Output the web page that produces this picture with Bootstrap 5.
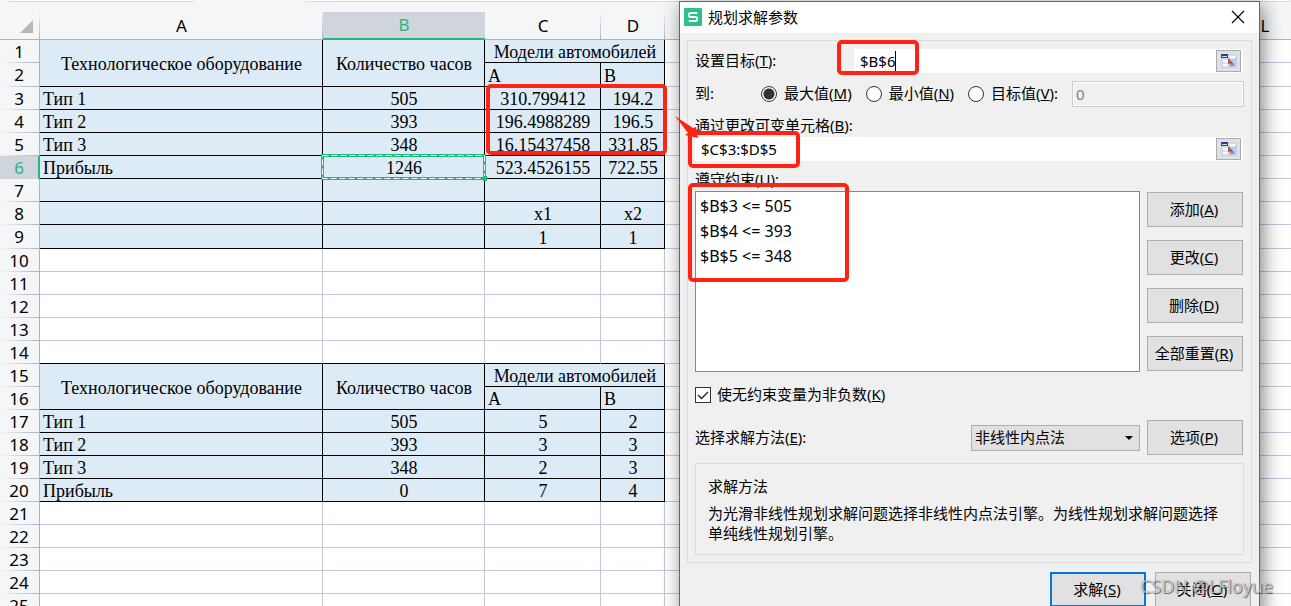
<!DOCTYPE html>
<html lang="zh-CN">
<head>
<meta charset="utf-8">
<meta name="viewport" content="width=device-width, initial-scale=1">
<title>规划求解参数</title>
<link href="https://cdn.jsdelivr.net/npm/bootstrap@5.3.0/dist/css/bootstrap.min.css" rel="stylesheet">
<style>
  body { font-family: "Noto Sans", "Noto Sans CJK SC", sans-serif; font-size: 15px; line-height: 20px; color: #000; background: #fff; }

  /* formula bar remainder above the sheet */
  .bar-strip { height: 12px; background: #f5f6f8; }
  .bar-strip div { height: 2px; background: #fff; border: 1px solid #d8dadd; border-top: 0; border-radius: 0 0 2px 2px; }
  .name-box { width: 186px; margin-left: 8px; margin-right: 111px; }

  /* sheet */
  .sheet { table-layout: fixed; width: 1304px; border-collapse: separate; border-spacing: 0; font-family: "Liberation Serif", serif; font-size: 18px; }
  .sheet th, .sheet td { padding: 0; height: 23px; line-height: 22px; border: 0 solid #c0c7da; border-width: 0 1px 1px 0; white-space: nowrap; text-align: center; vertical-align: middle; }
  .sheet td { padding: 2px 0 0 1px; line-height: 20px; }
  .sheet .tall > * { height: 24px; }
  .c-head { width: 40px; } .c-a { width: 283px; } .c-b { width: 162px; } .c-c { width: 116px; } .c-d { width: 64px; } .c-x { width: 80px; }
  .sheet th { font-family: "Noto Sans", sans-serif; font-size: 17px; font-weight: 400; background: #f5f6f8; border-right-color: #a8b2c8; }
  .sheet tbody th { border-bottom: 0; background: linear-gradient(90deg, #f5f6f8, #a8b2c8) 0 100% / 100% 1px no-repeat #f5f6f8; padding-right: 1px; }
  .sheet thead th { height: 28px; border-bottom-color: #a8b2c8; border-right: 0; background: linear-gradient(#f5f6f8, #a8b2c8) 100% 0 / 1px 100% no-repeat #f5f6f8; }
  .sheet thead th.picked { background: #d0d4dd; color: #1fba7c; border-bottom: 2px solid #1fba7c; }
  .sheet tbody th.picked { background: #d0d4dd; color: #1fba7c; border-right: 2px solid #1fba7c; padding: 0; }
  .sheet td.f { background: #ddebf6; border-color: #000; }
  .sheet td.l { text-align: left; padding-left: 3px; }
  .sheet td.base { border-bottom-color: #000; }
  .sheet td.selected-cell { position: relative; }
  .marquee { position: absolute; left: -2px; top: -2px; width: 167px; height: 28px; z-index: 1; }

  /* dialog */
  .solver { position: absolute; left: 679px; top: 1px; width: 581px; background: #f0f0f0; border: 1px solid #666; box-shadow: 3px 4px 18px rgba(0,0,0,.5); z-index: 2; }
  .solver-title { height: 31px; background: #fff; padding: 0 14px 2px 4px; gap: 6px; }
  .solver-body { padding: 7px; }
  .solver label, .solver .to-label { padding-bottom: 2px; }
  .frame { border: 1px solid #dcdcdc; }
  .frame-main { padding: 8px 7px 7px; }
  .frame-note { height: 92px; margin-top: 8px; padding: 12px 12px; }
  .note-name { margin-bottom: 7px; }
  .solver input[type=text] { border: 0; outline: 0; background: #fff; height: 24px; padding: 2px 6px; color: #000; min-width: 0; }
  .solver .target-label { width: 159px; }
  .solver .to-label { width: 66px; }
  .solver .goal { margin-left: 7px; margin-right: 14px; }
  .solver .goal-last { margin-right: 0; }
  .solver input[type=text].value-box { height: 26px; width: 172px; padding: 0 3px; background: #f0f0f0; color: #808080; border: 1px solid #ccc; box-shadow: inset 0 0 0 1px #fff; }
  .ref-box { background: #fff; padding-right: 2px; margin-right: 1px; }
  .pick { width: 25px; height: 22px; padding: 0; border: 1px solid #adadad; background: #e1e1e1; flex: none; }
  .pick svg { display: block; margin: auto; }
  .caret { position: absolute; left: 41px; top: 2px; width: 1px; height: 20px; background: #000; }
  .solver input[type=radio], .solver input[type=checkbox] { appearance: none; width: 16px; height: 16px; margin: 0; background: #fff; border: 1px solid #333; flex: none; }
  .solver input[type=radio] { border-radius: 50%; }
  .solver input[type=radio]:checked { background: radial-gradient(circle, #333 0 5px, #fff 6px); }
  .nonneg-row { margin: 12px 0 14px; }
  .nonneg-row label { margin-left: 6px; }
  .tick { position: absolute; left: 0; top: 1px; pointer-events: none; }
  .solver .field-label { height: 30px; padding-bottom: 2px; }
  .rules { height: 181px; background: #fff; border: 1px solid #828790; padding: 2px 4px; font-size: 16px; line-height: 25px; }
  .solver .cmd { height: 35px; width: 96px; padding: 0 2px 2px 0; border: 1px solid #adadad; border-radius: 0; background: #e1e1e1; color: #000; font-size: 15px; line-height: 20px; }
  .solver .cmd.main-cmd { border: 2px solid #0078d7; }
  .cmd-stack { gap: 13px; padding-top: 1px; }
  .cmd-row { gap: 7px; margin-right: 1px; }
  .solver-foot { gap: 9px; padding: 9px 1px 0 0; }
  .method-select { appearance: none; width: 169px; height: 26px; padding: 0 3px 2px; border: 1px solid #adadad; border-radius: 0; color: #000; background: #e1e1e1; }
  .method-arrow { position: absolute; right: 7px; top: 11px; border: 4px solid transparent; border-top-color: #000; border-bottom: 0; pointer-events: none; }
  .marks { position: absolute; left: 0; top: 0; z-index: 3; pointer-events: none; }
  .stamp { position: absolute; left: 1140px; top: 574px; z-index: 4; font-family: "Open Sans", sans-serif; font-size: 18px; line-height: 24px; color: rgba(240,240,240,.7); text-shadow: 1px 1px 1px rgba(0,0,0,.5), 0 0 1px rgba(0,0,0,.4); pointer-events: none; }
</style>
</head>
<body>
<main class="position-relative vh-100 overflow-hidden">
  <div class="bar-strip d-flex"><div class="name-box"></div><div class="flex-grow-1"></div></div>

  <table class="sheet">
    <colgroup><col class="c-head"><col class="c-a"><col class="c-b"><col class="c-c"><col class="c-d"><col class="c-x" span="8"></colgroup>
    <thead>
      <tr>
        <th><svg width="40" height="27" class="d-block"><path d="M33 8V21H20z" fill="#b7b7b7"/></svg></th>
        <th>A</th><th class="picked">B</th><th>C</th><th>D</th><th>E</th><th>F</th><th>G</th><th>H</th><th>I</th><th>J</th><th>K</th><th>L</th>
      </tr>
    </thead>
    <tbody>
      <tr><th>1</th><td class="f" rowspan="2">Технологическое оборудование</td><td class="f" rowspan="2">Количество часов</td><td class="f" colspan="2">Модели автомобилей</td><td colspan="8"></td></tr>
      <tr class="tall"><th>2</th><td class="f l">A</td><td class="f l">B</td><td colspan="8"></td></tr>
      <tr><th>3</th><td class="f l">Тип 1</td><td class="f">505</td><td class="f">310.799412</td><td class="f">194.2</td><td colspan="8"></td></tr>
      <tr><th>4</th><td class="f l">Тип 2</td><td class="f">393</td><td class="f">196.4988289</td><td class="f">196.5</td><td colspan="8"></td></tr>
      <tr><th>5</th><td class="f l">Тип 3</td><td class="f">348</td><td class="f">16.15437458</td><td class="f">331.85</td><td colspan="8"></td></tr>
      <tr><th class="picked">6</th><td class="f l">Прибыль</td><td class="f selected-cell">1246<svg class="marquee" viewBox="0 0 167 28"><path d="M1.5 1.5H163.5V24.5H1.5z" fill="none" stroke="#1fba7c" stroke-width="3"/><path d="M1.5 1.5H163.5V24.5H1.5z" fill="none" stroke="#fff" stroke-width="1" stroke-dasharray="6 3"/><path d="M162 22h4v5h-4z" fill="#1fba7c"/></svg></td><td class="f">523.4526155</td><td class="f">722.55</td><td colspan="8"></td></tr>
      <tr><th>7</th><td class="f"></td><td class="f"></td><td class="f"></td><td class="f"></td><td colspan="8"></td></tr>
      <tr><th>8</th><td class="f"></td><td class="f"></td><td class="f">x1</td><td class="f">x2</td><td colspan="8"></td></tr>
      <tr class="tall"><th>9</th><td class="f"></td><td class="f"></td><td class="f">1</td><td class="f">1</td><td colspan="8"></td></tr>
      <tr><th>10</th><td></td><td></td><td></td><td></td><td colspan="8"></td></tr>
      <tr><th>11</th><td></td><td></td><td></td><td></td><td colspan="8"></td></tr>
      <tr><th>12</th><td></td><td></td><td></td><td></td><td colspan="8"></td></tr>
      <tr><th>13</th><td></td><td></td><td></td><td></td><td colspan="8"></td></tr>
      <tr><th>14</th><td class="base"></td><td class="base"></td><td class="base"></td><td class="base"></td><td colspan="8"></td></tr>
      <tr><th>15</th><td class="f" rowspan="2">Технологическое оборудование</td><td class="f" rowspan="2">Количество часов</td><td class="f" colspan="2">Модели автомобилей</td><td colspan="8"></td></tr>
      <tr><th>16</th><td class="f l">A</td><td class="f l">B</td><td colspan="8"></td></tr>
      <tr><th>17</th><td class="f l">Тип 1</td><td class="f">505</td><td class="f">5</td><td class="f">2</td><td colspan="8"></td></tr>
      <tr><th>18</th><td class="f l">Тип 2</td><td class="f">393</td><td class="f">3</td><td class="f">3</td><td colspan="8"></td></tr>
      <tr><th>19</th><td class="f l">Тип 3</td><td class="f">348</td><td class="f">2</td><td class="f">3</td><td colspan="8"></td></tr>
      <tr><th>20</th><td class="f l">Прибыль</td><td class="f">0</td><td class="f">7</td><td class="f">4</td><td colspan="8"></td></tr>
      <tr><th>21</th><td></td><td></td><td></td><td></td><td colspan="8"></td></tr>
      <tr><th>22</th><td></td><td></td><td></td><td></td><td colspan="8"></td></tr>
      <tr><th>23</th><td></td><td></td><td></td><td></td><td colspan="8"></td></tr>
      <tr><th>24</th><td></td><td></td><td></td><td></td><td colspan="8"></td></tr>
      <tr><th>25</th><td></td><td></td><td></td><td></td><td colspan="8"></td></tr>
    </tbody>
  </table>

  <form class="solver" role="dialog" aria-labelledby="solver-name">
    <div class="solver-title d-flex align-items-center">
      <svg width="18" height="18" viewBox="0 0 18 18"><rect width="18" height="18" rx="1" fill="#2dc189"/><path d="M13.2 5H6.500Q4.800 5 4.800 7T6.500 9h5Q13.200 9 13.200 11T11.500 13H4.800" fill="none" stroke="#fff" stroke-width="1.800"/></svg>
      <span id="solver-name">规划求解参数</span>
      <button type="button" class="btn p-0 border-0 ms-auto d-flex" aria-label="关闭"><svg width="14" height="14" viewBox="0 0 14 14"><path d="M1 1l12 12M13 1L1 13" stroke="#000" stroke-width="1.200"/></svg></button>
    </div>
    <div class="solver-body">
      <div class="frame frame-main">
        <div class="d-flex align-items-center">
          <label class="target-label" for="target">设置目标(<u>T</u>):</label>
          <div class="ref-box d-flex align-items-center flex-grow-1 position-relative">
            <input type="text" id="target" class="flex-grow-1" value="$B$6"><span class="caret"></span>
            <button type="button" class="pick" aria-label="选择目标单元格"><svg width="16" height="14" viewBox="0 0 16 14"><path d="M1 1h14v12H1z" fill="#fff" stroke="#a9c4f5"/><path d="M8 5h7v8H8z" fill="#b8cdfb"/><path d="M1 5h14M1 9h14M8 1v12" stroke="#a9c4f5"/><path d="M0 0h7v4H0z" fill="#333a9a"/><path d="M1 2h5v1H1z" fill="#ddd"/><path d="M7 4l5 5-2 0 1 3-1 0-1-3-2 2z" fill="#b5533c"/><path d="M10 8l3 4" stroke="#444"/></svg></button>
          </div>
        </div>
        <div class="d-flex align-items-center mt-2">
          <span class="to-label">到:</span>
          <input type="radio" name="goal" id="g-max" checked><label for="g-max" class="goal">最大值(<u>M</u>)</label>
          <input type="radio" name="goal" id="g-min"><label for="g-min" class="goal">最小值(<u>N</u>)</label>
          <input type="radio" name="goal" id="g-val"><label for="g-val" class="goal goal-last">目标值(<u>V</u>):</label>
          <input type="text" class="value-box ms-auto" value="0" disabled aria-label="目标值">
        </div>
        <label class="field-label d-flex align-items-end" for="cells"><span>通过更改可变单元格(<u>B</u>):</span></label>
        <div class="ref-box d-flex align-items-center">
          <input type="text" id="cells" class="flex-grow-1" value="$C$3:$D$5">
          <button type="button" class="pick" aria-label="选择可变单元格"><svg width="16" height="14" viewBox="0 0 16 14"><path d="M1 1h14v12H1z" fill="#fff" stroke="#a9c4f5"/><path d="M8 5h7v8H8z" fill="#b8cdfb"/><path d="M1 5h14M1 9h14M8 1v12" stroke="#a9c4f5"/><path d="M0 0h7v4H0z" fill="#333a9a"/><path d="M1 2h5v1H1z" fill="#ddd"/><path d="M7 4l5 5-2 0 1 3-1 0-1-3-2 2z" fill="#b5533c"/><path d="M10 8l3 4" stroke="#444"/></svg></button>
        </div>
        <div class="field-label d-flex align-items-end" id="rules-name"><span>遵守约束(<u>U</u>):</span></div>
        <div class="d-flex cmd-row">
          <ul class="rules list-unstyled mb-0 flex-grow-1" aria-labelledby="rules-name">
            <li>$B$3 &lt;= 505</li><li>$B$4 &lt;= 393</li><li>$B$5 &lt;= 348</li>
          </ul>
          <div class="cmd-stack d-flex flex-column">
            <button type="button" class="btn cmd">添加(<u>A</u>)</button>
            <button type="button" class="btn cmd">更改(<u>C</u>)</button>
            <button type="button" class="btn cmd">删除(<u>D</u>)</button>
            <button type="button" class="btn cmd">全部重置(<u>R</u>)</button>
          </div>
        </div>
        <div class="nonneg-row d-flex align-items-center position-relative">
          <input type="checkbox" id="nonneg" checked><svg class="tick" width="16" height="20" viewBox="0 0 16 20"><path d="M3 10l3.500 3.500L13 7" fill="none" stroke="#222" stroke-width="1.400"/></svg>
          <label for="nonneg">使无约束变量为非负数(<u>K</u>)</label>
        </div>
        <div class="d-flex align-items-center cmd-row">
          <label for="method" class="me-auto">选择求解方法(<u>E</u>):</label>
          <div class="position-relative d-flex">
            <select id="method" class="method-select"><option>非线性内点法</option></select><span class="method-arrow"></span>
          </div>
          <button type="button" class="btn cmd">选项(<u>P</u>)</button>
        </div>
        <div class="frame frame-note">
          <div class="note-name">求解方法</div>
          <div>为光滑非线性规划求解问题选择非线性内点法引擎。为线性规划求解问题选择单纯线性规划引擎。</div>
        </div>
      </div>
      <div class="solver-foot d-flex justify-content-end">
        <button type="submit" class="btn cmd main-cmd">求解(<u>S</u>)</button>
        <button type="button" class="btn cmd">关闭(<u>O</u>)</button>
      </div>
    </div>
  </form>

  <svg class="marks" width="1291" height="606" viewBox="0 0 1291 606" fill="none" stroke="#ff2313" stroke-width="4">
    <rect x="488" y="86" width="177" height="67" rx="3"/>
    <rect x="839" y="42" width="78" height="31" rx="3"/>
    <rect x="690" y="133" width="108" height="33" rx="3"/>
    <rect x="690" y="185" width="157" height="95" rx="3"/>
    <path d="M675 116L693 128 696 127 698 138 685 135 688 133z" fill="#ff2313" stroke="none"/>
  </svg>
  <div class="stamp">CSDN @LFloyue</div>
</main>
<script src="https://cdn.jsdelivr.net/npm/bootstrap@5.3.0/dist/js/bootstrap.bundle.min.js"></script>
</body>
</html>
